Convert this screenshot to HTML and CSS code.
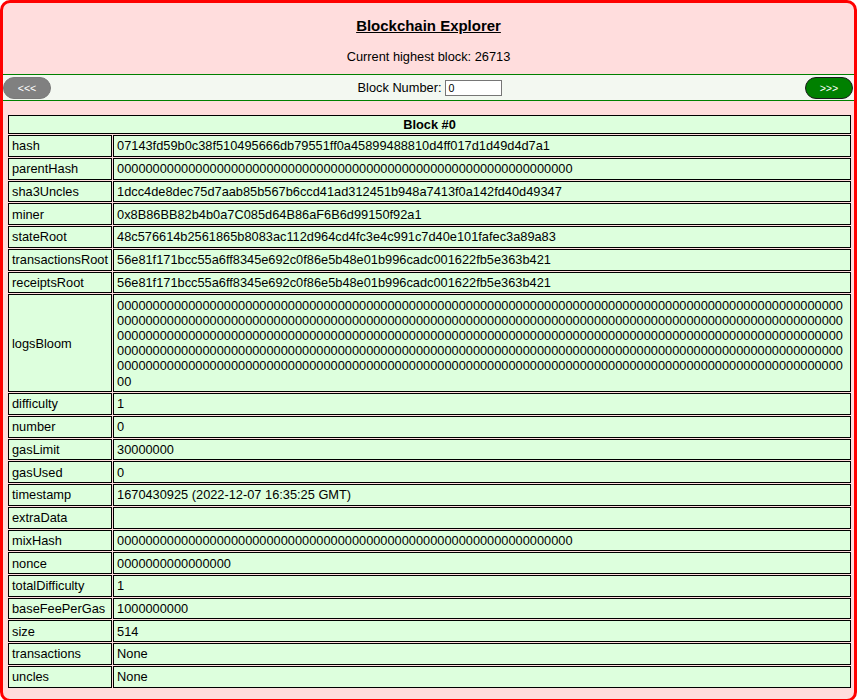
FILE: index.html
```html
<!DOCTYPE html>
<html lang="en">
<head>
<meta charset="utf-8">
<title>Blockchain Explorer</title>
<link rel="stylesheet" href="styles.css">
</head>
<body>
<div class="page">
  <header class="head">
    <h3 class="title">Blockchain Explorer</h3>
    <p class="highest">Current highest block: 26713</p>
  </header>
  <nav class="nav">
    <button class="btn prev">&lt;&lt;&lt;</button>
    <label class="blocknum">Block Number: <input class="num" type="text" value="0"></label>
    <button class="btn next">&gt;&gt;&gt;</button>
  </nav>
  <table class="block">
    <tr><th class="caption" colspan="2">Block #0</th></tr>
    <tr><td class="key">hash</td><td class="val">07143fd59b0c38f510495666db79551ff0a45899488810d4ff017d1d49d4d7a1</td></tr>
    <tr><td class="key">parentHash</td><td class="val">0000000000000000000000000000000000000000000000000000000000000000</td></tr>
    <tr><td class="key">sha3Uncles</td><td class="val">1dcc4de8dec75d7aab85b567b6ccd41ad312451b948a7413f0a142fd40d49347</td></tr>
    <tr><td class="key">miner</td><td class="val">0x8B86BB82b4b0a7C085d64B86aF6B6d99150f92a1</td></tr>
    <tr><td class="key">stateRoot</td><td class="val">48c576614b2561865b8083ac112d964cd4fc3e4c991c7d40e101fafec3a89a83</td></tr>
    <tr><td class="key">transactionsRoot</td><td class="val">56e81f171bcc55a6ff8345e692c0f86e5b48e01b996cadc001622fb5e363b421</td></tr>
    <tr><td class="key">receiptsRoot</td><td class="val">56e81f171bcc55a6ff8345e692c0f86e5b48e01b996cadc001622fb5e363b421</td></tr>
    <tr><td class="key">logsBloom</td><td class="val">0000000000000000000000000000000000000000000000000000000000000000<!--
-->0000000000000000000000000000000000000000000000000000000000000000<!--
-->0000000000000000000000000000000000000000000000000000000000000000<!--
-->0000000000000000000000000000000000000000000000000000000000000000<!--
-->0000000000000000000000000000000000000000000000000000000000000000<!--
-->0000000000000000000000000000000000000000000000000000000000000000<!--
-->0000000000000000000000000000000000000000000000000000000000000000<!--
-->0000000000000000000000000000000000000000000000000000000000000000</td></tr>
    <tr><td class="key">difficulty</td><td class="val">1</td></tr>
    <tr><td class="key">number</td><td class="val">0</td></tr>
    <tr><td class="key">gasLimit</td><td class="val">30000000</td></tr>
    <tr><td class="key">gasUsed</td><td class="val">0</td></tr>
    <tr><td class="key">timestamp</td><td class="val">1670430925 (2022-12-07 16:35:25 GMT)</td></tr>
    <tr><td class="key">extraData</td><td class="val"></td></tr>
    <tr><td class="key">mixHash</td><td class="val">0000000000000000000000000000000000000000000000000000000000000000</td></tr>
    <tr><td class="key">nonce</td><td class="val">0000000000000000</td></tr>
    <tr><td class="key">totalDifficulty</td><td class="val">1</td></tr>
    <tr><td class="key">baseFeePerGas</td><td class="val">1000000000</td></tr>
    <tr><td class="key">size</td><td class="val">514</td></tr>
    <tr><td class="key">transactions</td><td class="val">None</td></tr>
    <tr><td class="key">uncles</td><td class="val">None</td></tr>
  </table>
</div>
</body>
</html>
```
FILE: styles.css
```css
html, body {
  margin: 0;
  padding: 0;
  background: #ffffff;
}

body {
  font-family: "Liberation Sans", Arial, sans-serif;
  font-size: 12.8px;
  color: #000;
}

.page {
  box-sizing: border-box;
  width: 857px;
  min-height: 700px;
  border: 3px solid #ff0000;
  border-radius: 10px;
  background: #ffdddd;
  padding-bottom: 10px;
}

.head {
  text-align: center;
  padding: 14px 0 10px;
}

.title {
  margin: 0;
  font-size: 14.98px;
  line-height: 17px;
  font-weight: bold;
  text-decoration: underline;
}

.highest {
  margin: 15px 0 0;
  line-height: 15px;
}

.nav {
  display: flex;
  align-items: center;
  justify-content: space-between;
  height: 25px;
  padding: 0 1px 0 0;
  border-top: 1px solid #008000;
  border-bottom: 1px solid #008000;
  background: #f3f8f1;
}

.btn {
  box-sizing: border-box;
  width: 48px;
  height: 22px;
  margin: 0;
  padding: 0;
  border-radius: 11px;
  font-family: "Liberation Sans", Arial, sans-serif;
  font-size: 10.67px;
  color: #ffffff;
  cursor: pointer;
}

.prev {
  background: #808080;
  border: 1px solid #7a7a7a;
}

.next {
  background: #008000;
  border: 1px solid #1c1c1c;
}

.blocknum {
  line-height: 15px;
  display: flex;
  align-items: center;
  gap: 4px;
  margin-left: 4px;
}

.num {
  box-sizing: border-box;
  width: 57px;
  height: 16px;
  margin: 0;
  padding: 0 2px;
  border: 1px solid #767676;
  font-family: "Liberation Sans", Arial, sans-serif;
  font-size: 10.67px;
  background: #fff;
}

.block {
  margin: 13px 2px 0 4px;
  width: 845px;
  border-collapse: separate;
  border-spacing: 1px;
}

.block th,
.block td {
  border: 1px solid #000;
  background: #ddffdd;
  line-height: 15.2px;
  text-align: left;
  vertical-align: middle;
}

.block th.caption {
  text-align: center;
  font-weight: bold;
  padding: 1px 3px;
}

.block td {
  padding: 2.275px 3px;
}

.key {
  width: 96px;
  white-space: nowrap;
}

.val {
  word-break: break-all;
}
```
